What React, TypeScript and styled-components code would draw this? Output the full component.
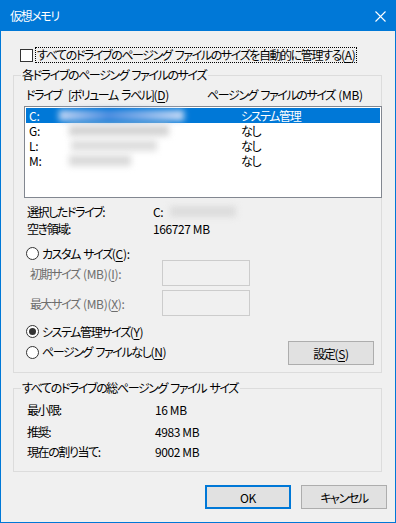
import * as React from "react";
import styled, { createGlobalStyle } from "styled-components";

const GlobalStyle = createGlobalStyle`
  html, body {
    margin: 0;
    padding: 0;
    background: #f0f0f0;
  }
  body {
    font-family: "Noto Sans CJK JP", "Noto Sans", sans-serif;
    font-size: 12px;
    font-feature-settings: "palt";
    letter-spacing: -1.4px;
    word-spacing: 2px;
    color: #000;
    white-space: nowrap;
  }
`;

const Window = styled.div`
  box-sizing: border-box;
  width: 396px;
  height: 523px;
  border: 1px solid #0078d7;
  background: #f0f0f0;
  display: flex;
  flex-direction: column;
  overflow: hidden;
`;

const TitleBar = styled.div`
  height: 30px;
  flex: none;
  background: #0078d7;
  color: #fff;
  display: flex;
  align-items: center;
  justify-content: space-between;
  padding: 0 8px 0 9px;
`;

const Title = styled.span`
  line-height: 16px;
`;

const CloseButton = styled.span`
  display: flex;
  width: 11px;
  height: 11px;
  margin-right: 1px;
`;

const Content = styled.div`
  display: flex;
  flex-direction: column;
  padding: 0 0 0 12px;
`;

const CheckRow = styled.label`
  display: flex;
  align-items: center;
  height: 16px;
  margin: 16px 0 0 7px;
`;

const CheckBox = styled.span`
  box-sizing: border-box;
  width: 13px;
  height: 13px;
  border: 1px solid #333;
  background: #fff;
  flex: none;
`;

const FocusText = styled.span`
  margin-left: 3px;
  line-height: 14px;
  padding: 0 1px 0 1px;
  outline: 1px dotted #000;
`;

const Group = styled.fieldset<{ $top: number; $bottom: number }>`
  margin: ${(p) => p.$top}px 0 0 0;
  padding: 0 0 ${(p) => p.$bottom}px 0;
  width: 369px;
  box-sizing: border-box;
  border: 1px solid #dcdcdc;
  min-width: 0;
`;

const Legend = styled.legend`
  margin-left: 7px;
  padding: 0 2px 0 1px;
  line-height: 16px;
`;

const HeaderRow = styled.div`
  display: flex;
  line-height: 16px;
  margin: 4px 0 0 12px;
`;

const HeaderCell = styled.span<{ $w?: number }>`
  width: ${(p) => (p.$w ? `${p.$w}px` : "auto")};
  flex: none;
`;

const ListBox = styled.div`
  box-sizing: border-box;
  margin: 3px 0 0 10px;
  width: 358px;
  height: 92px;
  border: 1px solid #828790;
  background: #fff;
  padding: 1px;
`;

const ListRow = styled.div<{ $selected?: boolean }>`
  display: flex;
  align-items: center;
  height: 15px;
  line-height: 15px;
  padding-left: 3px;
  background: ${(p) => (p.$selected ? "#0078d7" : "transparent")};
  color: ${(p) => (p.$selected ? "#fff" : "#000")};
`;

const DriveCell = styled.span`
  width: 28px;
  flex: none;
  letter-spacing: -0.2px;
`;

const Smudge = styled.span<{ $w: number; $tone: string; $ml: number }>`
  display: inline-block;
  width: ${(p) => p.$w}px;
  height: 11px;
  margin-left: ${(p) => p.$ml}px;
  background: ${(p) => p.$tone};
  filter: blur(3px);
  flex: none;
`;

const SizeCell = styled.span<{ $x: number }>`
  margin-left: auto;
  width: ${(p) => p.$x}px;
  flex: none;
`;

const InfoRow = styled.div<{ $top?: number }>`
  display: flex;
  align-items: center;
  height: 17px;
  margin: ${(p) => p.$top ?? 0}px 0 0 13px;
`;

const InfoLabel = styled.span<{ $w: number }>`
  width: ${(p) => p.$w}px;
  flex: none;
`;

const Num = styled.span`
  letter-spacing: -0.4px;
  word-spacing: 0;
`;

const Lat = styled.span`
  letter-spacing: -0.3px;
`;

const RadioRow = styled.div<{ $top: number; $h?: number }>`
  display: flex;
  align-items: center;
  height: ${(p) => p.$h ?? 16}px;
  margin: ${(p) => p.$top}px 0 0 12px;
`;

const Radio = styled.span<{ $checked?: boolean }>`
  box-sizing: border-box;
  width: 13px;
  height: 13px;
  border: 1px solid #333;
  border-radius: 50%;
  background: #fff;
  flex: none;
  display: flex;
  align-items: center;
  justify-content: center;
  margin-right: 3px;
  &::after {
    content: "";
    width: 7px;
    height: 7px;
    border-radius: 50%;
    background: #333;
    display: ${(p) => (p.$checked ? "block" : "none")};
  }
`;

const SizeRow = styled.div<{ $top: number }>`
  display: flex;
  align-items: center;
  margin: ${(p) => p.$top}px 0 0 16px;
  color: #6d6d6d;
`;

const SizeLabel = styled.span`
  width: 132px;
  flex: none;
`;

const EditBox = styled.span`
  box-sizing: border-box;
  width: 88px;
  height: 26px;
  border: 1px solid #cccccc;
  background: #f0f0f0;
`;

const LastRow = styled.div`
  display: flex;
  align-items: center;
  justify-content: space-between;
  margin: 2px 7px 0 12px;
`;

const RadioLabel = styled.span`
  display: flex;
  align-items: center;
  line-height: 16px;
  margin-top: -2px;
`;

const Button = styled.span<{ $default?: boolean }>`
  box-sizing: border-box;
  width: 86px;
  height: 24px;
  display: flex;
  align-items: center;
  justify-content: center;
  background: #e1e1e1;
  border: ${(p) => (p.$default ? "2px solid #0078d7" : "1px solid #adadad")};
`;

const TotalRow = styled.div<{ $top: number }>`
  display: flex;
  line-height: 16px;
  margin: ${(p) => p.$top}px 0 0 13px;
`;

const ButtonBar = styled.div`
  display: flex;
  justify-content: flex-end;
  gap: 10px;
  margin: 13px 8px 0 0;
`;

const U = styled.u`
  text-underline-offset: 2px;
`;

const Key = ({ k }: { k: string }) => (
  <Lat>
    (<U>{k}</U>)
  </Lat>
);

const drives = [
  { name: "C:", size: "システム管理", selected: true, w: 125, ml: 2, tone: "linear-gradient(90deg,#c6d8f4,#4f8fe0 40%,#c9dcf6)" },
  { name: "G:", size: "なし", w: 100, ml: 12, tone: "#d4d4d4" },
  { name: "L:", size: "なし", w: 86, ml: 14, tone: "#dedede" },
  { name: "M:", size: "なし", w: 62, ml: 12, tone: "#dadada" },
];

export default function App() {
  return (
    <>
      <GlobalStyle />
      <Window>
        <TitleBar>
          <Title>仮想メモリ</Title>
          <CloseButton>
            <svg width="11" height="11" viewBox="0 0 11 11">
              <path d="M0.5 0.5L10.5 10.5M10.5 0.5L0.5 10.5" stroke="#fff" strokeWidth="1.1" />
            </svg>
          </CloseButton>
        </TitleBar>
        <Content>
          <CheckRow>
            <CheckBox />
            <FocusText>
              すべてのドライブのページング ファイルのサイズを自動的に管理する<Key k="A" />
            </FocusText>
          </CheckRow>

          <Group $top={4} $bottom={7}>
            <Legend>各ドライブのページング ファイルのサイズ</Legend>
            <HeaderRow>
              <HeaderCell $w={181}>
                ドライブ&nbsp; [ボリューム ラベル]<Key k="D" />
              </HeaderCell>
              <HeaderCell>
                ページング ファイルのサイズ <Lat>(MB)</Lat>
              </HeaderCell>
            </HeaderRow>
            <ListBox>
              {drives.map((d) => (
                <ListRow key={d.name} $selected={d.selected}>
                  <DriveCell>{d.name}</DriveCell>
                  <Smudge $w={d.w} $ml={d.ml} $tone={d.tone} />
                  <SizeCell $x={139}>{d.size}</SizeCell>
                </ListRow>
              ))}
            </ListBox>

            <InfoRow $top={5}>
              <InfoLabel $w={126}>選択したドライブ:</InfoLabel>
              <Num>C:</Num>
              <Smudge $w={66} $ml={7} $tone="#dcdcdc" />
            </InfoRow>
            <InfoRow>
              <InfoLabel $w={126}>空き領域:</InfoLabel>
              <Num>166727 MB</Num>
            </InfoRow>

            <RadioRow $top={9} $h={14}>
              <Radio />
              カスタム サイズ<Key k="C" />:
            </RadioRow>
            <SizeRow $top={0}>
              <SizeLabel>
                初期サイズ <Lat>(MB)</Lat>
                <Key k="I" />:
              </SizeLabel>
              <EditBox />
            </SizeRow>
            <SizeRow $top={4}>
              <SizeLabel>
                最大サイズ <Lat>(MB)</Lat>
                <Key k="X" />:
              </SizeLabel>
              <EditBox />
            </SizeRow>

            <RadioRow $top={7}>
              <Radio $checked />
              システム管理サイズ<Key k="Y" />
            </RadioRow>
            <LastRow>
              <RadioLabel>
                <Radio />
                ページング ファイルなし<Key k="N" />
              </RadioLabel>
              <Button>
                設定<Key k="S" />
              </Button>
            </LastRow>
          </Group>

          <Group $top={7} $bottom={11}>
            <Legend>すべてのドライブの総ページング ファイル サイズ</Legend>
            <TotalRow $top={6}>
              <InfoLabel $w={128}>最小限:</InfoLabel>
              <Num>16 MB</Num>
            </TotalRow>
            <TotalRow $top={6}>
              <InfoLabel $w={128}>推奨:</InfoLabel>
              <Num>4983 MB</Num>
            </TotalRow>
            <TotalRow $top={4}>
              <InfoLabel $w={128}>現在の割り当て:</InfoLabel>
              <Num>9002 MB</Num>
            </TotalRow>
          </Group>

          <ButtonBar>
            <Button $default>
              <Num>OK</Num>
            </Button>
            <Button>キャンセル</Button>
          </ButtonBar>
        </Content>
      </Window>
    </>
  );
}
